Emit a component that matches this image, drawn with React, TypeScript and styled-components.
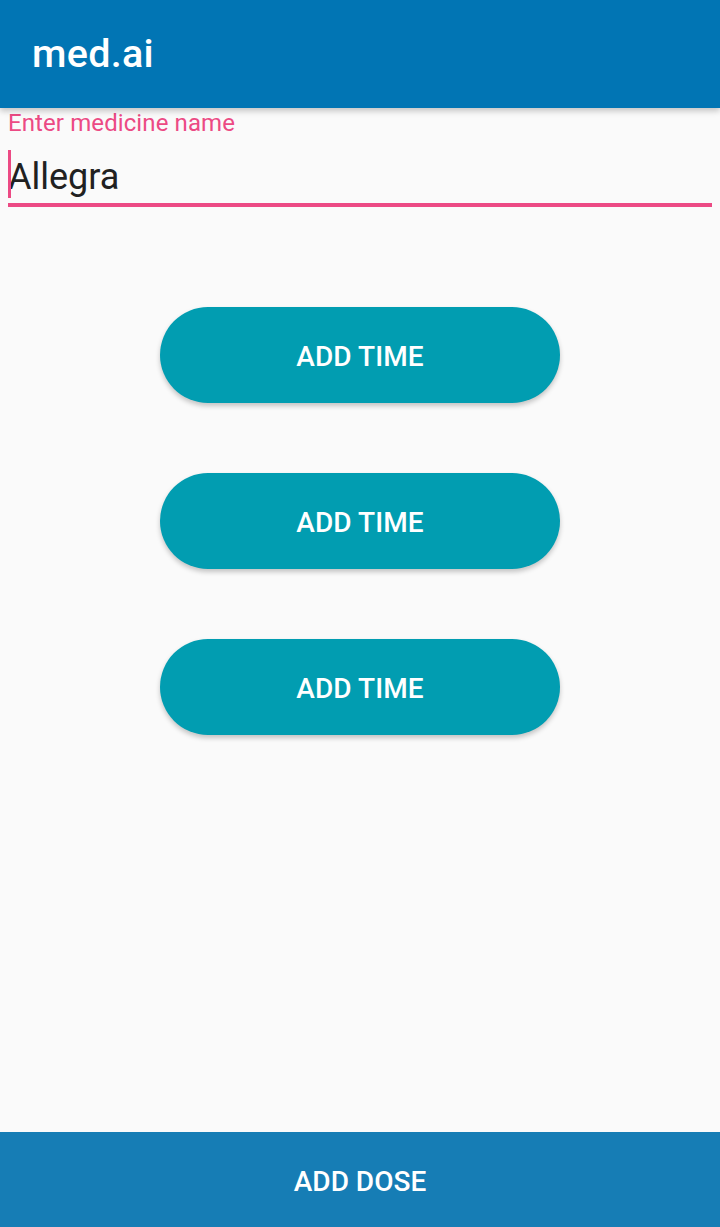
import React from "react";
import styled, { createGlobalStyle } from "styled-components";

const Global = createGlobalStyle`
  html, body { margin: 0; padding: 0; background: #fafafa; }
  body { font-family: Roboto, "Noto Sans", sans-serif; }
  * { box-sizing: border-box; }
`;

const Screen = styled.div`
  width: 720px;
  height: 1227px;
  display: flex;
  flex-direction: column;
  background: #fafafa;
  overflow: hidden;
`;

const AppBar = styled.header`
  height: 108px;
  flex: none;
  background: #0175b4;
  display: flex;
  align-items: center;
  padding-left: 32px;
  box-shadow: 0 3px 6px rgba(0, 0, 0, 0.22);
  position: relative;
  z-index: 1;
`;

const Title = styled.h1`
  margin: 0;
  color: #fff;
  font-family: Roboto, sans-serif;
  font-weight: 500;
  font-size: 39.5px;
  letter-spacing: 0.3px;
  padding-bottom: 2px;
`;

const Field = styled.div`
  padding: 0 8px;
  display: flex;
  flex-direction: column;
`;

const Label = styled.label`
  color: #ec4a84;
  font-size: 24px;
  line-height: 28px;
  padding-top: 1px;
  letter-spacing: 0.1px;
  font-family: Roboto, sans-serif;
`;

const InputRow = styled.div`
  margin-top: 13px;
  height: 48px;
  display: flex;
  align-items: center;
  position: relative;
`;

const Caret = styled.span`
  position: absolute;
  left: 0;
  top: 0;
  width: 3px;
  height: 48px;
  background: #ec4a84;
`;

const Value = styled.span`
  color: #212121;
  font-size: 36px;
  font-family: Roboto, sans-serif;
  padding-top: 5px;
`;

const Underline = styled.div`
  margin-top: 5px;
  height: 4px;
  background: #ec4a84;
`;

const Buttons = styled.div`
  display: flex;
  flex-direction: column;
  align-items: center;
  gap: 70px;
  padding-top: 100px;
`;

const PillButton = styled.button`
  width: 400px;
  height: 96px;
  border: none;
  border-radius: 48px;
  background: #019db1;
  color: #fff;
  font-family: Roboto, sans-serif;
  font-weight: 500;
  font-size: 28px;
  letter-spacing: 0.1px;
  padding: 2px 0 0;
  box-shadow: 0 3px 5px rgba(0, 0, 0, 0.22);
  cursor: pointer;
`;

const BottomBar = styled.button`
  margin-top: auto;
  height: 95px;
  flex: none;
  border: none;
  background: #167db5;
  color: #fff;
  font-family: Roboto, sans-serif;
  font-weight: 500;
  font-size: 28px;
  letter-spacing: 0;
  width: 100%;
  padding-top: 4px;
`;

export default function App() {
  return (
    <>
      <Global />
      <Screen>
        <AppBar>
          <Title>med.ai</Title>
        </AppBar>
        <Field>
          <Label>Enter medicine name</Label>
          <InputRow>
            <Caret />
            <Value>Allegra</Value>
          </InputRow>
          <Underline />
        </Field>
        <Buttons>
          <PillButton>ADD TIME</PillButton>
          <PillButton>ADD TIME</PillButton>
          <PillButton>ADD TIME</PillButton>
        </Buttons>
        <BottomBar>ADD DOSE</BottomBar>
      </Screen>
    </>
  );
}
